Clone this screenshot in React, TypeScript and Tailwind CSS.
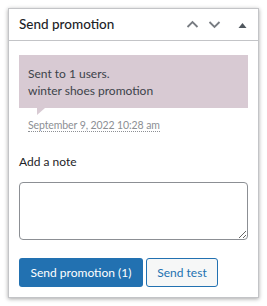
// Metabox "Send promotion" — historique d'envoi + note + actions.

const font = { fontFamily: 'Lato, "Noto Sans", sans-serif' };

function ChevronUp() {
  return (
    <svg width="13" height="13" viewBox="0 0 13 13" fill="none" stroke="#787c82" strokeWidth="1.8">
      <path d="M1.5 9 L6.5 4 L11.5 9" />
    </svg>
  );
}

function ChevronDown() {
  return (
    <svg width="13" height="13" viewBox="0 0 13 13" fill="none" stroke="#787c82" strokeWidth="1.8">
      <path d="M1.5 4 L6.5 9 L11.5 4" />
    </svg>
  );
}

export default function App() {
  return (
    <div className="w-[267px] h-[306px] bg-white p-2" style={font}>
      <div className="w-[251px] h-[290px] border border-[#c3c4c7] bg-white shadow-[0_1px_4px_rgba(0,0,0,0.35)]">
        {/* Header */}
        <div className="h-[32px] flex items-center border-b border-[#c3c4c7] pl-[10px] pr-[11px]">
          <h2 className="flex-1 text-[13.5px] font-medium text-[#1d2327] leading-none">Send promotion</h2>
          <div className="flex items-center gap-[9px] mr-[17px]">
            <ChevronUp />
            <ChevronDown />
          </div>
          <svg width="9" height="8" viewBox="0 0 9 8">
            <path d="M0.5 7 L4.5 2 L8.5 7 Z" fill="#50575e" />
          </svg>
        </div>

        {/* Body */}
        <div className="px-[10px] pt-[14px]">
          <div className="relative">
            <div className="bg-[#d8cad3] px-[9px] pt-[10px] pb-[9px] text-[12px] leading-[17px] text-[#3c434a]">
              <p>Sent to 1 users.</p>
              <p>winter shoes promotion</p>
            </div>
            <div className="absolute left-[18px] -bottom-[7px] w-0 h-0 border-l-[8px] border-l-[#d8cad3] border-b-[7px] border-b-transparent" />
          </div>
          <p className="pl-[9px] mt-[10px] text-[10.5px] leading-[14px] tracking-[-0.1px] text-[#8c8f94]">
            <span className="border-b border-dotted border-[#8c8f94]">September 9, 2022 10:28 am</span>
          </p>

          <label className="block mt-[21px] text-[12px] leading-[17px] text-[#1d2327]">Add a note</label>
          <textarea className="block mt-[12px] w-full h-[58px] border border-[#8c8f94] rounded-[4px] bg-white" />

          <div className="flex gap-[3px] mt-[18px]">
            <button className="w-[124px] h-[29px] rounded-[3px] bg-[#2271b1] text-white text-[12px]">
              Send promotion (1)
            </button>
            <button className="w-[72px] h-[29px] rounded-[3px] border border-[#2271b1] bg-[#f6f7f7] text-[#2271b1] text-[12px]">
              Send test
            </button>
          </div>
        </div>
      </div>
    </div>
  );
}
